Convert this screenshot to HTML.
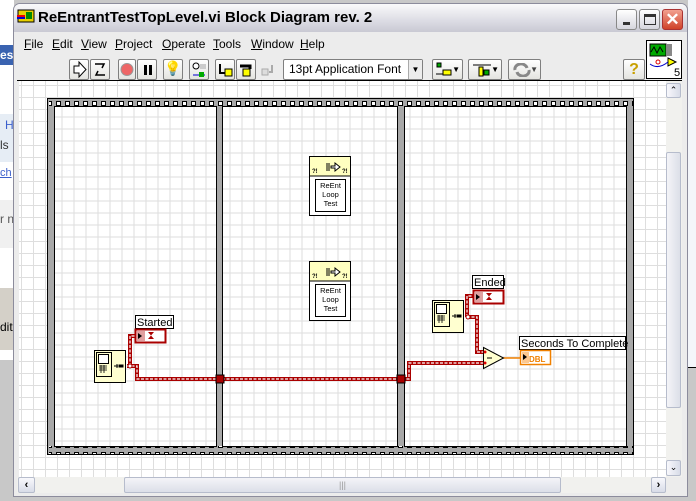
<!DOCTYPE html>
<html><head><meta charset="utf-8"><style>
*{margin:0;padding:0;box-sizing:border-box}
body{width:696px;height:501px;overflow:hidden;position:relative;background:#c8c8c8;font-family:"Liberation Sans",Tahoma,sans-serif}
.a{position:absolute}
.btn{position:absolute;top:59px;height:21px;background:linear-gradient(#fff,#e4e4e0);border:1px solid #7f7f7f;border-radius:2px}
.menu span{position:absolute;top:37px;font-size:12px;color:#000}
</style></head><body>
<!-- background webpage at left -->
<div class="a" style="left:0;top:0;width:14px;height:501px;background:#fff"></div>
<div class="a" style="left:0;top:45px;width:14px;height:20px;background:#3a63b0"></div>
<div class="a" style="left:0;top:48px;font-size:12px;font-weight:bold;color:#fff">es</div>
<div class="a" style="left:0;top:114px;width:14px;height:48px;background:#e6edf5"></div>
<div class="a" style="left:5px;top:118px;font-size:12px;color:#3b5fcc">H</div>
<div class="a" style="left:0;top:138px;font-size:12px;color:#333">ls</div>
<div class="a" style="left:0;top:167px;font-size:11px;color:#3b5fcc;text-decoration:underline">ch</div>
<div class="a" style="left:0;top:200px;width:14px;height:48px;background:#f0f0f0"></div>
<div class="a" style="left:0;top:212px;font-size:12px;color:#555">r n</div>
<div class="a" style="left:0;top:288px;width:14px;height:62px;background:#d4d0c8"></div>
<div class="a" style="left:0;top:320px;font-size:12px;color:#000">dit</div>
<div class="a" style="left:0;top:360px;width:14px;height:141px;background:#c8c8c8"></div>
<div class="a" style="left:688px;top:0;width:8px;height:367px;background:#f4f6fa"></div>
<div class="a" style="left:688px;top:367px;width:8px;height:134px;background:#c8c8c8;border-top:1px solid #000"></div>

<!-- window -->
<div class="a" style="left:13px;top:3px;width:675px;height:494px;background:#ececec;border:1px solid #8c8c9c;border-radius:7px 7px 0 0"></div>
<div class="a" style="left:14px;top:4px;width:673px;height:28px;background:linear-gradient(#fafafb,#dcdce4 60%,#c9c9d3);border-radius:6px 6px 0 0"></div>
<svg class="a" style="left:17px;top:9px" width="18" height="16"><rect x="1" y="1" width="16" height="12" fill="#e8d000" stroke="#000"/><path d="M0 7h8" stroke="#e00" stroke-width="2"/><path d="M0 9h8" stroke="#00c" stroke-width="2"/><rect x="9" y="3" width="6" height="7" fill="#080"/></svg>
<div class="a" style="left:38px;top:9px;font-size:15px;font-weight:bold;color:#000">ReEntrantTestTopLevel.vi Block Diagram rev. 2</div>
<div class="a" style="left:616px;top:9px;width:21px;height:21px;border:1px solid #888;border-radius:3px;background:linear-gradient(#fff,#d6d6de)"><div class="a" style="left:6px;top:12px;width:7px;height:3px;background:#333"></div></div>
<div class="a" style="left:639px;top:9px;width:21px;height:21px;border:1px solid #888;border-radius:3px;background:linear-gradient(#fff,#d6d6de)"><div class="a" style="left:4px;top:4px;width:12px;height:11px;border:1px solid #333;border-top-width:3px"></div></div>
<div class="a" style="left:662px;top:9px;width:21px;height:21px;border:1px solid #a33;border-radius:3px;background:linear-gradient(#f2a090,#d0432a);color:#fff;font-size:17px;font-weight:bold;text-align:center;line-height:19px">✕</div>

<div class="menu">
<span style="left:24px"><u>F</u>ile</span><span style="left:52px"><u>E</u>dit</span><span style="left:81px"><u>V</u>iew</span><span style="left:115px"><u>P</u>roject</span><span style="left:162px"><u>O</u>perate</span><span style="left:213px"><u>T</u>ools</span><span style="left:251px"><u>W</u>indow</span><span style="left:300px"><u>H</u>elp</span>
</div>
<div class="a" style="left:646px;top:40px;width:36px;height:39px;background:#fff;border:1px solid #000"></div>
<svg class="a" style="left:648px;top:42px" width="34" height="36"><rect x="2" y="2" width="16" height="12" fill="#0a0" stroke="#000"/><path d="M3 10 l3-5 3 6 3-6 3 5" stroke="#000" fill="none"/><rect x="18" y="2" width="6" height="12" fill="#888"/><path d="M20 16 l8 4 -8 4z" fill="#ff0" stroke="#000"/><path d="M2 22 q8 6 18 -2" stroke="#00c" fill="none"/><circle cx="10" cy="20" r="2" fill="none" stroke="#d00"/><text x="26" y="34" font-size="11" font-family="Liberation Sans">5</text></svg>

<!-- toolbar -->
<div class="btn" style="left:69px;width:20px"><svg width="18" height="19"><path d="M4 6h5V2l7 7.5-7 7.5v-4H4z" fill="#fff" stroke="#000"/></svg></div>
<div class="btn" style="left:90px;width:20px"><svg width="18" height="19"><path d="M4 4h9l-2 4M14 15H5l2-4" fill="none" stroke="#000" stroke-width="1.5"/></svg></div>
<div class="btn" style="left:118px;width:18px"><svg width="16" height="19"><circle cx="8" cy="9.5" r="6" fill="#e66" stroke="#999"/></svg></div>
<div class="btn" style="left:137px;width:20px"><div class="a" style="left:6px;top:5px;width:3px;height:10px;background:#000"></div><div class="a" style="left:11px;top:5px;width:3px;height:10px;background:#000"></div></div>
<div class="btn" style="left:163px;width:20px;font-size:14px;text-align:center">💡</div>
<div class="btn" style="left:189px;width:20px"><svg width="18" height="19"><circle cx="6" cy="6" r="3" fill="#fff" stroke="#000"/><rect x="10" y="4" width="6" height="5" fill="#ccc"/><path d="M3 15h12" stroke="#00c"/><rect x="9" y="12" width="5" height="5" fill="#0a0"/></svg></div>
<div class="btn" style="left:215px;width:20px"><svg width="18" height="19"><path d="M4 4v9h5" stroke="#000" stroke-width="2" fill="none"/><rect x="9" y="9" width="7" height="7" fill="#ff0" stroke="#000"/></svg></div>
<div class="btn" style="left:236px;width:20px"><svg width="18" height="19"><path d="M3 6h10v3" stroke="#000" stroke-width="3" fill="none"/><rect x="6" y="9" width="7" height="7" fill="#ff0" stroke="#000"/></svg></div>
<div class="a" style="left:259px;top:60px;width:18px;height:20px"><svg width="18" height="19"><rect x="3" y="9" width="6" height="6" fill="#ddd" stroke="#aaa"/><path d="M10 12h3V5" stroke="#aaa" stroke-width="2" fill="none"/></svg></div>
<div class="btn" style="left:283px;width:140px;background:#fff;font-size:12px;line-height:19px;padding-left:5px">13pt Application Font<div class="a" style="right:0;top:0;width:14px;height:19px;border-left:1px solid #aaa;background:#ececec;font-size:8px;text-align:center">▼</div></div>
<div class="btn" style="left:432px;width:31px;font-size:8px;line-height:19px;text-align:right;padding-right:2px"><svg class="a" style="left:2px;top:2px" width="18" height="16"><rect x="2" y="1" width="4" height="4" fill="#0a0" stroke="#000"/><rect x="8" y="8" width="8" height="5" fill="#ff0" stroke="#000"/><path d="M1 12h7" stroke="#000"/></svg>▼</div>
<div class="btn" style="left:468px;width:34px;font-size:8px;line-height:19px;text-align:right;padding-right:2px"><svg class="a" style="left:3px;top:2px" width="20" height="16"><path d="M1 3h18" stroke="#000"/><rect x="7" y="5" width="4" height="9" fill="#ff0" stroke="#000"/><rect x="12" y="8" width="5" height="5" fill="#0a0" stroke="#000"/></svg>▼</div>
<div class="btn" style="left:508px;width:33px;font-size:8px;line-height:19px;text-align:right;padding-right:2px;color:#444"><svg class="a" style="left:4px;top:3px" width="18" height="14"><path d="M2 7a6 5 0 0 1 12-2M16 7a6 5 0 0 1-12 2" stroke="#888" stroke-width="3" fill="none"/></svg>▼</div>
<div class="btn" style="left:623px;width:22px;font-size:16px;text-align:center;line-height:19px;color:#c8a000;font-weight:bold">?</div>

<div class="a" style="left:17px;top:80px;width:665px;height:1px;background:#000"></div>

<!-- diagram -->
<div class="a" style="left:19px;top:81px;width:647px;height:396px;background-color:#fff;background-image:linear-gradient(90deg,#dedede 1px,transparent 1px),linear-gradient(#dedede 1px,transparent 1px);background-size:12px 12px;background-position:2px 4px"></div>

<svg class="a" style="left:0;top:0" width="696" height="501">
<defs>
<pattern id="holes" x="0" y="0" width="9" height="9" patternUnits="userSpaceOnUse"><rect x="2.5" y="2.5" width="4" height="4" fill="#fff" stroke="#000"/></pattern>
</defs>
<rect x="47.5" y="98.5" width="586" height="356" fill="#a8a8a8" stroke="#000"/>
<rect x="49" y="99" width="584" height="8" fill="url(#holes)"/>
<rect x="49" y="446" width="584" height="8" fill="url(#holes)"/>
<rect x="54.5" y="106.5" width="162" height="340" fill="#fff" stroke="#000"/>
<rect x="222.5" y="106.5" width="175" height="340" fill="#fff" stroke="#000"/>
<rect x="404.5" y="106.5" width="222" height="340" fill="#fff" stroke="#000"/>
<g fill="none" stroke="#dedede">
<path d="M62 107v339M74 107v339M86 107v339M98 107v339M110 107v339M122 107v339M134 107v339M146 107v339M158 107v339M170 107v339M182 107v339M194 107v339M206 107v339"/>
<path d="M230 107v339M242 107v339M254 107v339M266 107v339M278 107v339M290 107v339M302 107v339M314 107v339M326 107v339M338 107v339M350 107v339M362 107v339M374 107v339M386 107v339"/>
<path d="M410 107v339M422 107v339M434 107v339M446 107v339M458 107v339M470 107v339M482 107v339M494 107v339M506 107v339M518 107v339M530 107v339M542 107v339M554 107v339M566 107v339M578 107v339M590 107v339M602 107v339M614 107v339"/>
<path d="M55 117h571M55 129h571M55 141h571M55 153h571M55 165h571M55 177h571M55 189h571M55 201h571M55 213h571M55 225h571M55 237h571M55 249h571M55 261h571M55 273h571M55 285h571M55 297h571M55 309h571M55 321h571M55 333h571M55 345h571M55 357h571M55 369h571M55 381h571M55 393h571M55 405h571M55 417h571M55 429h571M55 441h571"/>
</g>
<rect x="216" y="107" width="7" height="339" fill="#a8a8a8"/><rect x="397" y="107" width="8" height="339" fill="#a8a8a8"/>
<path d="M216.5 107v339M222.5 107v339M397.5 107v339M404.5 107v339" stroke="#000"/>

<!-- wires -->
<g fill="none" stroke="#a00" stroke-width="4">
<path d="M127 366h10v13h83h180h9v-16h74"/>
<path d="M130 366v-30h6"/>
<path d="M467 317v-21h9"/>
<path d="M467 317h10v35h7"/>
</g>
<g fill="none" stroke="#fff" stroke-width="1.2" stroke-dasharray="3 1.5">
<path d="M127 366h10v13h83h180h9v-16h74"/>
<path d="M130 366v-30h6"/>
<path d="M467 317v-21h9"/>
<path d="M467 317h10v35h7"/>
</g>
<path d="M503 358h17" stroke="#f08000" stroke-width="1.5"/>
<rect x="216" y="375" width="8" height="8" fill="#a00" stroke="#000"/>
<rect x="397" y="375" width="8" height="8" fill="#a00" stroke="#000"/>
<circle cx="130" cy="366" r="2" fill="#fff" stroke="#a00"/>
<circle cx="468" cy="317" r="2" fill="#fff" stroke="#a00"/>

<!-- tick count nodes -->
<g id="tc">
<rect x="94.5" y="350.5" width="31" height="32" fill="#ffffd0" stroke="#000"/>
<rect x="96.5" y="352.5" width="15" height="24" fill="#ffffd0" stroke="#000"/>
<rect x="98.5" y="354.5" width="10" height="9" fill="#fff" stroke="#000"/>
<path d="M99 366h8M99 368h8M99 370h8M101 365v8M104 365v8" stroke="#000" stroke-width=".8"/>
<path d="M114 366h4M117 364v4M119 365h4v2h-4z" stroke="#000" fill="#000"/>
</g>
<use href="#tc" x="338" y="-50"/>

<!-- indicators -->
<rect x="135.5" y="315.5" width="38" height="13" fill="#fff" stroke="#000"/>
<text x="137" y="326" font-size="11" font-family="Liberation Sans">Started</text>
<rect x="135.5" y="329.5" width="30" height="13" fill="#fff" stroke="#a00" stroke-width="2"/>
<rect x="137" y="331" width="8" height="10" fill="#e0a0a0"/><path d="M138 333l4 3-4 3z"/>
<path d="M148 332h6l-6 7h6z" fill="#a00"/>

<rect x="472.5" y="275.5" width="31" height="13" fill="#fff" stroke="#000"/>
<text x="474" y="286" font-size="11" font-family="Liberation Sans">Ended</text>
<rect x="473.5" y="290.5" width="30" height="13" fill="#fff" stroke="#a00" stroke-width="2"/>
<rect x="475" y="292" width="8" height="10" fill="#e0a0a0"/><path d="M476 294l4 3-4 3z"/>
<path d="M486 293h6l-6 7h6z" fill="#a00"/>

<rect x="519.5" y="336.5" width="106" height="13" fill="#fff" stroke="#000"/>
<text x="521" y="347" font-size="11" font-family="Liberation Sans">Seconds To Complete</text>
<rect x="520.5" y="350.5" width="30" height="14" fill="#fff" stroke="#f08000" stroke-width="1.5"/>
<rect x="522" y="352" width="7" height="11" fill="#fcc890"/><path d="M523 354l4 3-4 3z"/>
<text x="529" y="362" font-size="8" font-weight="bold" fill="#f08000" font-family="Liberation Sans">DBL</text>

<!-- subtract -->
<path d="M483.5 347.5v21l20-10.5z" fill="#ffffd0" stroke="#000"/>
<path d="M487 358h5" stroke="#000"/>
<circle cx="485" cy="352" r="1.5" fill="#d00"/><circle cx="485" cy="363" r="1.5" fill="#d00"/>

<!-- subVIs -->
<g id="sv">
<rect x="309.5" y="156.5" width="41" height="59" fill="#fff" stroke="#000"/>
<rect x="310" y="157" width="40" height="19" fill="#ffffc0"/>
<path d="M310 176h40" stroke="#000"/>
<path d="M327 163v8M329 163v8M331 166h4v-3l5 4-5 4v-3h-4z" stroke="#000" fill="#fff"/>
<text x="312" y="173" font-size="6" font-weight="bold">?!</text><text x="342" y="173" font-size="6" font-weight="bold">?!</text>
<rect x="315.5" y="179.5" width="30" height="32" fill="#fff" stroke="#000"/>
<text x="330.5" y="188" font-size="7.5" text-anchor="middle" font-family="Liberation Sans">ReEnt</text>
<text x="330.5" y="197" font-size="7.5" text-anchor="middle" font-family="Liberation Sans">Loop</text>
<text x="330.5" y="206" font-size="7.5" text-anchor="middle" font-family="Liberation Sans">Test</text>
</g>
<use href="#sv" x="0" y="105"/>
</svg>

<!-- vertical scrollbar -->
<div class="a" style="left:666px;top:81px;width:16px;height:396px;background:#f1f1ee"></div>
<div class="a" style="left:666px;top:83px;width:15px;height:15px;border:1px solid #b6bccc;border-radius:2px;background:linear-gradient(90deg,#f8f8fc,#d8dce8);font-size:9px;text-align:center;line-height:13px">⌃</div>
<div class="a" style="left:666px;top:152px;width:15px;height:256px;border:1px solid #b6bccc;border-radius:2px;background:linear-gradient(90deg,#f4f4f8,#dcdfe8)"></div>
<div class="a" style="left:666px;top:460px;width:15px;height:16px;border:1px solid #b6bccc;border-radius:2px;background:linear-gradient(90deg,#f8f8fc,#d8dce8);font-size:9px;text-align:center;line-height:13px">⌄</div>
<!-- horizontal scrollbar -->
<div class="a" style="left:17px;top:477px;width:649px;height:16px;background:#f1f1ee"></div>
<div class="a" style="left:18px;top:477px;width:17px;height:16px;border:1px solid #b6bccc;border-radius:2px;background:linear-gradient(#f8f8fc,#d8dce8);font-size:11px;font-weight:bold;text-align:center;line-height:14px">‹</div>
<div class="a" style="left:124px;top:477px;width:437px;height:16px;border:1px solid #b6bccc;border-radius:2px;background:linear-gradient(#f4f4f8,#dcdfe8);font-size:9px;text-align:center;line-height:14px;color:#999">|||</div>
<div class="a" style="left:651px;top:477px;width:15px;height:16px;border:1px solid #b6bccc;border-radius:2px;background:linear-gradient(#f8f8fc,#d8dce8);font-size:11px;font-weight:bold;text-align:center;line-height:14px">›</div>
</body></html>
